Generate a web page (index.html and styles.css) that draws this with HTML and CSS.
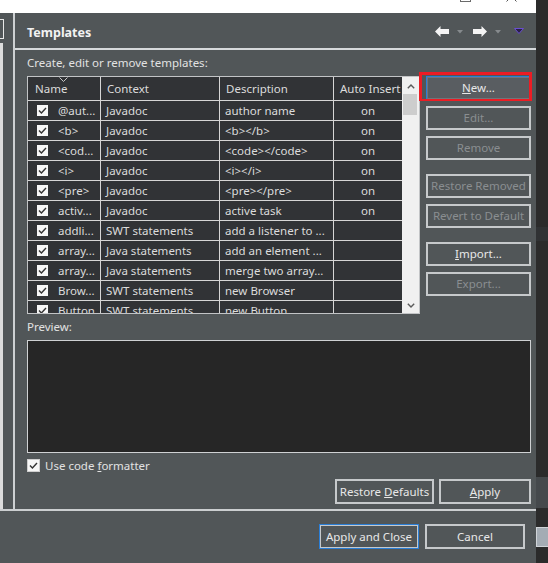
FILE: index.html
```html
<!DOCTYPE html>
<html lang="en">
<head>
<meta charset="utf-8">
<title>Templates</title>
<link rel="stylesheet" href="styles.css">
</head>
<body>
<div class="screen">
  <div class="window">
    <div class="titlebar">
      <span class="tb-max"></span>
      <svg class="tb-close" width="11" height="11" viewBox="0 0 11 11"><path d="M0.5 0.5 L10.5 10.5 M10.5 0.5 L0.5 10.5" stroke="#555" stroke-width="1"/></svg>
    </div>
    <div class="main">
      <div class="side">
        <div class="side-field"></div>
        <div class="side-tree"></div>
      </div>
      <div class="page">
        <div class="page-header">
          <h1 class="page-title">Templates</h1>
          <div class="nav">
            <svg class="nav-arrow" width="14" height="11" viewBox="0 0 14 11"><path d="M0 5.5 L5.5 0 L5.5 3 L14 3 L14 8 L5.5 8 L5.5 11 Z" fill="#f4f4f4"/></svg>
            <svg class="nav-drop" width="6" height="4" viewBox="0 0 6 4"><path d="M0 0 L6 0 L3 3.5 Z" fill="#868a8d"/></svg>
            <svg class="nav-arrow" width="14" height="11" viewBox="0 0 14 11"><path d="M14 5.5 L8.5 0 L8.5 3 L0 3 L0 8 L8.5 8 L8.5 11 Z" fill="#f4f4f4"/></svg>
            <svg class="nav-drop" width="6" height="4" viewBox="0 0 6 4"><path d="M0 0 L6 0 L3 3.5 Z" fill="#868a8d"/></svg>
            <svg class="nav-menu" width="10" height="6" viewBox="0 0 10 6"><path d="M0.5 0.5 L9.5 0.5 L5 5.5 Z" fill="#2a1f48" stroke="#6a4ed0" stroke-width="1"/></svg>
          </div>
        </div>
        <div class="page-body">
          <p class="label">Create, edit or remove templates:</p>
          <div class="top">
            <div class="table">
              <div class="grid">
                <div class="row head">
                  <div class="cell c-name">Name<svg class="sort" width="9" height="5" viewBox="0 0 9 5"><path d="M0.5 0.5 L4.5 4.5 L8.5 0.5" fill="none" stroke="#c8c8c8" stroke-width="1"/></svg></div>
                  <div class="cell">Context</div>
                  <div class="cell">Description</div>
                  <div class="cell c-auto-h">Auto Insert</div>
                </div>
                <div class="row"><div class="cell c-name"><span class="cb"></span>@aut...</div><div class="cell">Javadoc</div><div class="cell">author name</div><div class="cell c-auto">on</div></div>
                <div class="row"><div class="cell c-name"><span class="cb"></span>&lt;b&gt;</div><div class="cell">Javadoc</div><div class="cell">&lt;b&gt;&lt;/b&gt;</div><div class="cell c-auto">on</div></div>
                <div class="row"><div class="cell c-name"><span class="cb"></span>&lt;cod...</div><div class="cell">Javadoc</div><div class="cell">&lt;code&gt;&lt;/code&gt;</div><div class="cell c-auto">on</div></div>
                <div class="row"><div class="cell c-name"><span class="cb"></span>&lt;i&gt;</div><div class="cell">Javadoc</div><div class="cell">&lt;i&gt;&lt;/i&gt;</div><div class="cell c-auto">on</div></div>
                <div class="row"><div class="cell c-name"><span class="cb"></span>&lt;pre&gt;</div><div class="cell">Javadoc</div><div class="cell">&lt;pre&gt;&lt;/pre&gt;</div><div class="cell c-auto">on</div></div>
                <div class="row"><div class="cell c-name"><span class="cb"></span>activ...</div><div class="cell">Javadoc</div><div class="cell">active task</div><div class="cell c-auto">on</div></div>
                <div class="row"><div class="cell c-name"><span class="cb"></span>addli...</div><div class="cell">SWT statements</div><div class="cell">add a listener to ...</div><div class="cell c-auto"></div></div>
                <div class="row"><div class="cell c-name"><span class="cb"></span>array...</div><div class="cell">Java statements</div><div class="cell">add an element ...</div><div class="cell c-auto"></div></div>
                <div class="row"><div class="cell c-name"><span class="cb"></span>array...</div><div class="cell">Java statements</div><div class="cell">merge two array...</div><div class="cell c-auto"></div></div>
                <div class="row"><div class="cell c-name"><span class="cb"></span>Brow...</div><div class="cell">SWT statements</div><div class="cell">new Browser</div><div class="cell c-auto"></div></div>
                <div class="row"><div class="cell c-name"><span class="cb"></span>Button...</div><div class="cell">SWT statements</div><div class="cell">new Button</div><div class="cell c-auto"></div></div>
              </div>
              <div class="vscroll">
                <div class="sb-btn"><svg width="8" height="5" viewBox="0 0 8 5"><path d="M0.8 4.3 L4 1.1 L7.2 4.3" fill="none" stroke="#5a5a5a" stroke-width="1.4"/></svg></div>
                <div class="sb-track"><div class="sb-thumb"></div></div>
                <div class="sb-btn"><svg width="8" height="5" viewBox="0 0 8 5"><path d="M0.8 0.7 L4 3.9 L7.2 0.7" fill="none" stroke="#5a5a5a" stroke-width="1.4"/></svg></div>
              </div>
            </div>
            <div class="btn-col">
              <div class="annot"></div>
              <button class="btn btn-focus"><u>N</u>ew...</button>
              <button class="btn" disabled>Edit...</button>
              <button class="btn" disabled>Remove</button>
              <button class="btn btn-group" disabled>Restore Removed</button>
              <button class="btn" disabled>Revert to Default</button>
              <button class="btn btn-group"><u>I</u>mport...</button>
              <button class="btn" disabled>Export...</button>
            </div>
          </div>
          <p class="label label-preview">Preview:</p>
          <div class="preview"></div>
          <div class="check-row"><span class="cb cb-form"></span><span>Use code <u>f</u>ormatter</span></div>
          <div class="page-actions">
            <button class="btn btn-restore">Restore <u>D</u>efaults</button>
            <button class="btn btn-apply"><u>A</u>pply</button>
          </div>
        </div>
      </div>
    </div>
    <div class="hsep"></div>
    <div class="dialog-actions">
      <button class="btn btn-dlg btn-default">Apply and Close</button>
      <button class="btn btn-dlg">Cancel</button>
    </div>
  </div>
  <div class="darkstrip">
    <div class="ds-line"></div>
    <div class="ds-block"></div>
    <div class="ds-btn"></div>
  </div>
</div>
</body>
</html>
```

FILE: styles.css
```css
html, body {
  margin: 0;
  padding: 0;
}
body {
  width: 548px;
  height: 563px;
  overflow: hidden;
  background: #2b2b2b;
  font-family: "Noto Sans", "Open Sans", sans-serif;
  font-size: 11.5px;
  color: #dcdcdc;
}
.screen {
  display: flex;
  height: 563px;
}
.window {
  width: 536px;
  display: flex;
  flex-direction: column;
  background: #515658;
}
.titlebar {
  height: 13px;
  background: #ffffff;
  display: flex;
  align-items: flex-start;
  overflow: hidden;
  padding-right: 19px;
}
.tb-max {
  margin-left: auto;
  width: 9px;
  height: 9px;
  border: 1px solid #6a6a6a;
  margin-top: -9px;
}
.tb-close {
  margin-left: 35px;
  margin-top: -9px;
}
.main {
  height: 496px;
  display: flex;
}
.side {
  width: 13px;
  border-right: 2px solid #cdd0d2;
  display: flex;
  flex-direction: column;
}
.side-field {
  width: 3px;
  height: 18px;
  margin-top: 6px;
  border: 1px solid #e8e8e8;
  border-left: none;
}
.side-tree {
  width: 3px;
  flex: 1;
  margin-top: 4px;
  background: #dcdcdc;
}
.page {
  flex: 1;
  display: flex;
  flex-direction: column;
  min-width: 0;
}
.page-header {
  height: 31px;
  padding-top: 4px;
  border-bottom: 2px solid #d6d9db;
  display: flex;
  align-items: center;
  padding-left: 12px;
  padding-right: 12px;
}
.page-title {
  margin: 0;
  font-size: 12.5px;
  font-weight: bold;
  color: #f2f2f2;
  flex: 1;
}
.nav {
  display: flex;
  align-items: center;
  margin-top: -3px;
}
.nav-arrow {
  display: block;
}
.nav-drop {
  display: block;
  margin: 1px 10px 0 8px;
}
.nav-menu {
  display: block;
  margin-left: 3px;
}
.page-body {
  padding: 6px 5px 0 12px;
  display: flex;
  flex-direction: column;
}
.label {
  margin: 0 0 6px 0;
  height: 14px;
  line-height: 14px;
  color: #e2e2e2;
  white-space: nowrap;
}
.label-preview {
  margin-top: 6px;
}
.top {
  display: flex;
  gap: 6px;
}
.table {
  width: 393px;
  height: 238px;
  box-sizing: border-box;
  border: 1px solid #c2c4c6;
  display: flex;
  background: #313336;
  overflow: hidden;
}
.grid {
  width: 374px;
  overflow: hidden;
}
.row {
  display: grid;
  grid-template-columns: 73px 119px 114px 68px;
  height: 20px;
  box-sizing: border-box;
  border-bottom: 1px solid #d6d6d6;
}
.row.head {
  height: 24px;
}
.cell {
  box-sizing: border-box;
  border-right: 1px solid #d6d6d6;
  padding-left: 5px;
  line-height: 19px;
  white-space: nowrap;
  overflow: hidden;
  color: #dcdcdc;
  display: flex;
  align-items: center;
}
.head .cell {
  line-height: 23px;
  padding-left: 6px;
}
.head .c-name {
  padding-left: 7px;
  position: relative;
}
.sort {
  position: absolute;
  left: 31px;
  top: 0;
}
.c-name {
  padding-left: 9px;
}
.c-auto, .c-auto-h {
  border-right: none;
}
.c-auto {
  justify-content: center;
  padding-left: 0;
}
.cb {
  display: inline-block;
  flex: none;
  width: 11px;
  height: 11px;
  margin-right: 10px;
  background: #f7f7f7 url("data:image/svg+xml,%3Csvg xmlns='http://www.w3.org/2000/svg' width='11' height='11' viewBox='0 0 11 11'%3E%3Cpath d='M2 5.6 L4.4 8 L9 3' fill='none' stroke='%23333' stroke-width='1.4'/%3E%3C/svg%3E") no-repeat center;
}
.vscroll {
  width: 17px;
  background: #f0f0f0;
  display: flex;
  flex-direction: column;
}
.sb-btn {
  height: 17px;
  display: flex;
  align-items: center;
  justify-content: center;
  padding-top: 2px;
  box-sizing: border-box;
}
.sb-btn svg {
  display: block;
}
.sb-track {
  flex: 1;
  padding: 0 2px 0 1px;
}
.sb-thumb {
  height: 21px;
  background: #cdcdcd;
}
.btn-col {
  width: 105px;
  display: flex;
  flex-direction: column;
  gap: 6px;
  position: relative;
}
.annot {
  position: absolute;
  left: -7px;
  top: -4px;
  width: 113px;
  height: 29px;
  box-sizing: border-box;
  border: 3px solid #ec1c24;
  border-bottom-width: 2px;
  z-index: 2;
}
.btn {
  box-sizing: border-box;
  display: block;
  height: 24px;
  line-height: 20px;
  padding: 0;
  margin: 0;
  border: 2px solid #c6c9cb;
  background: #515658;
  color: #e8e8e8;
  font-family: "Noto Sans", "Open Sans", sans-serif;
  font-size: 11.5px;
  text-align: center;
  white-space: nowrap;
}
.btn:disabled {
  color: #8a8e91;
}
.btn-focus {
  border: 1px solid #2a7ed6;
  line-height: 22px;
  box-shadow: inset 0 0 0 1px #70757a;
  background: #595d61;
}
.btn-group {
  margin-top: 8px;
}
.preview {
  height: 113px;
  box-sizing: border-box;
  border: 1px solid #cfd1d3;
  background: #262626;
}
.check-row {
  margin-top: 5px;
  height: 14px;
  display: flex;
  align-items: center;
  color: #e2e2e2;
  white-space: nowrap;
}
.cb-form {
  width: 11px;
  height: 11px;
  margin-right: 5px;
  border: 1px solid #cfcfcf;
}
.page-actions {
  margin-top: 7px;
  display: flex;
  justify-content: flex-end;
  gap: 5px;
}
.btn-restore {
  width: 99px;
  height: 25px;
  line-height: 21px;
}
.btn-apply {
  width: 92px;
  height: 25px;
  line-height: 21px;
}
.hsep {
  height: 2px;
  background: #cbced0;
}
.dialog-actions {
  flex: 1;
  display: flex;
  justify-content: flex-end;
  align-items: flex-start;
  padding-top: 13px;
  padding-right: 11px;
  gap: 6px;
}
.btn-dlg {
  width: 100px;
  height: 25px;
  line-height: 21px;
}
.btn-default {
  border: 1px solid #2a7ed6;
  line-height: 23px;
  box-shadow: inset 0 0 0 1px #c6c9cb;
}
.darkstrip {
  flex: 1;
  display: flex;
  flex-direction: column;
  background: #2b2b2b;
}
.ds-line {
  height: 14px;
  margin-top: 227px;
  background: #303234;
}
.ds-block {
  height: 31px;
  margin-top: 236px;
  background: #45494c;
}
.ds-btn {
  height: 20px;
  margin-top: 19px;
  box-sizing: border-box;
  border: 1px solid #d0d4d8;
  border-right: none;
  background: #a4acb4;
}
```
